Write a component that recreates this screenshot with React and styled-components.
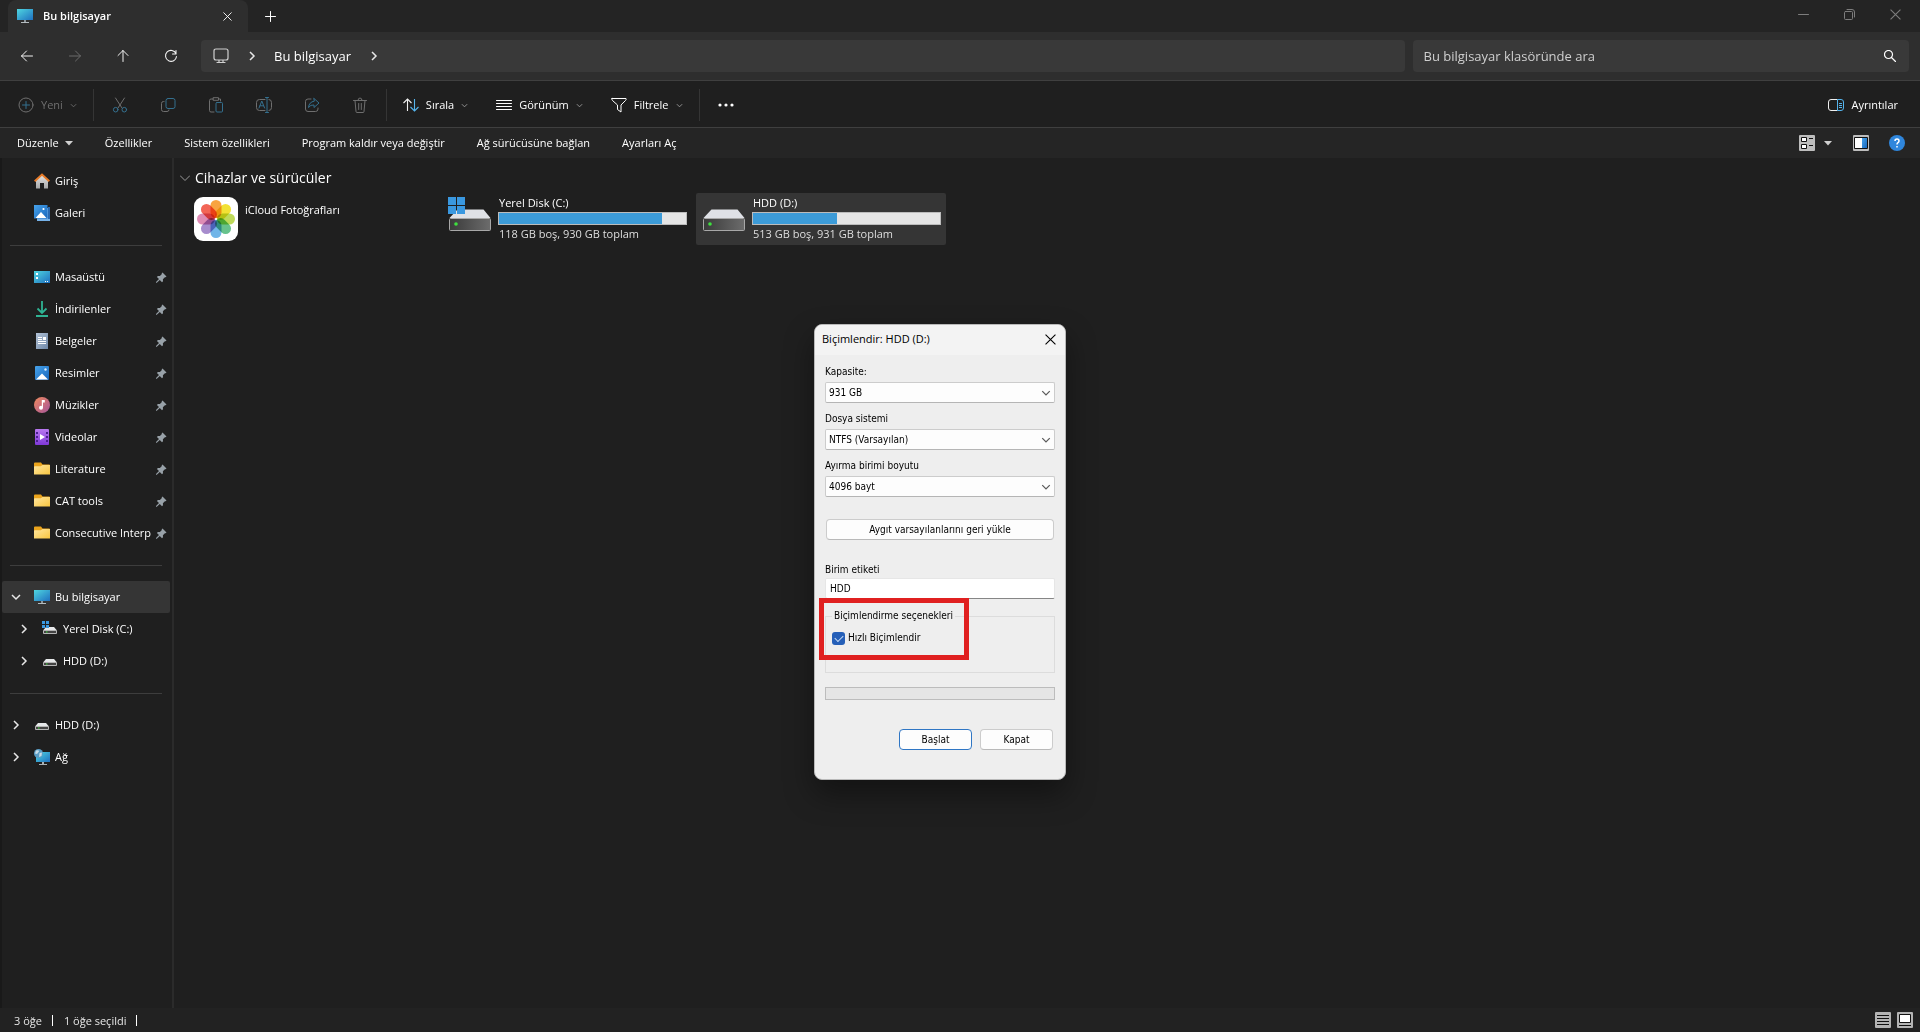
import React, { useState } from 'react';

import styled, { createGlobalStyle, css } from 'styled-components';

const GlobalStyle = createGlobalStyle`
  * {
    box-sizing: border-box;
  }

  body {
    margin: 0;
    background: #1f1f1f;
    color: #ffffff;
    font-family: 'Open Sans', 'Noto Sans', sans-serif;
    font-size: 11px;
    line-height: 16px;
  }

  button,
  input,
  select {
    margin: 0;
    font: inherit;
    color: inherit;
  }

  button {
    padding: 0;
    border: none;
    background: none;
  }

  svg {
    display: block;
    flex: none;
  }
`;

const Window = styled.div`
  display: flex;
  flex-direction: column;
  min-height: 100vh;
  background: #1f1f1f;
`;

/* ---------- tabs ---------- */

const TitleBar = styled.header`
  display: flex;
  align-items: stretch;
  height: 32px;
  padding-left: 8px;
  background: #242424;
`;

const Tab = styled.div`
  display: flex;
  align-items: center;
  gap: 10px;
  width: 240px;
  padding: 0 16px 0 9px;
  border-radius: 8px 8px 0 0;
  background: #2e2e2e;
  font-weight: 600;

  span {
    flex: 1;
  }
`;

const NewTabButton = styled.button`
  display: grid;
  place-items: center;
  width: 45px;
`;

const WindowButtons = styled.div`
  display: flex;
  margin-left: auto;
  padding: 0 2px 4px 0;

  button {
    display: grid;
    place-items: center;
    width: 46px;
    color: #7d7d7d;
  }
`;

/* ---------- navigation ---------- */

const NavBar = styled.nav`
  display: flex;
  align-items: center;
  gap: 8px;
  height: 49px;
  padding: 0 11px 0 7px;
  border-bottom: 1px solid #3f3f3f;
  background: #2e2e2e;
`;

const NavButtons = styled.div`
  display: flex;
  gap: 8px;
  margin-right: 2px;
`;

const NavButton = styled.button`
  display: grid;
  place-items: center;
  width: 40px;
  height: 32px;
  color: ${(props) => (props.disabled ? '#6b6b6b' : '#f3f3f3')};
`;

const AddressBar = styled.div`
  display: flex;
  flex: 12 1 0;
  align-items: center;
  height: 32px;
  padding-left: 12px;
  border-radius: 4px;
  background: #393939;
  font-size: 13px;

  a {
    color: inherit;
    text-decoration: none;
  }
`;

const Crumb = styled.span`
  display: grid;
  place-items: center;
  width: 45px;
`;

const SearchBox = styled.label`
  display: flex;
  flex: 5 1 0;
  align-items: center;
  height: 32px;
  border-radius: 4px;
  background: #393939;

  input {
    flex: 1;
    min-width: 0;
    padding: 0 11px;
    border: none;
    outline: none;
    background: none;
    font-size: 13px;
  }

  input::placeholder {
    color: #cfcfcf;
    opacity: 1;
  }

  svg {
    margin-right: 13px;
  }
`;

/* ---------- command bars ---------- */

const CommandBar = styled.div`
  display: flex;
  align-items: center;
  height: 47px;
  padding: 2px 8px 0 4px;
  border-bottom: 1px solid #3f3f3f;
`;

const CommandButton = styled.button`
  display: flex;
  align-items: center;
  gap: 7px;
  height: 32px;
  padding: 0 14px;
  color: ${(props) => (props.disabled ? '#6f6f6f' : '#ffffff')};
`;

const IconButton = styled.button`
  display: grid;
  place-items: center;
  width: 48px;
  height: 32px;
  color: ${(props) => (props.disabled ? '#6f6f6f' : '#ffffff')};
`;

const BarSeparator = styled.span`
  width: 1px;
  height: 32px;
  margin: 0 2px;
  background: #353535;
`;

const Spacer = styled.span`
  flex: 1;
`;

const OrganizeBar = styled.div`
  display: flex;
  align-items: center;
  gap: 2px;
  height: 30px;
  padding: 0 15px 0 2px;
  background: #252525;
`;

const OrganizeButton = styled.button`
  display: flex;
  align-items: center;
  gap: 6px;
  height: 24px;
  padding: 0 15px;
`;

const ViewTools = styled.div`
  display: flex;
  align-items: center;
  margin-left: auto;
  gap: 20px;

  button:first-child {
    display: flex;
    align-items: center;
    gap: 9px;
    margin-right: 1px;
  }
`;

/* ---------- sidebar ---------- */

const Body = styled.div`
  display: flex;
  flex: 1;
`;

const Sidebar = styled.aside`
  width: 174px;
  padding: 7px 0;
  border-left: 2px solid #191919;
  border-right: 2px solid #2b2b2b;
`;

const TreeItem = styled.a`
  display: flex;
  align-items: center;
  width: 168px;
  height: 32px;
  padding: 0 3px 0 ${(props) => (props.$nested ? 14 : 6)}px;
  border-radius: 2px;
  background: ${(props) => (props.$selected ? '#353535' : 'transparent')};
  color: inherit;
  text-decoration: none;
  white-space: nowrap;

  span {
    flex: 1;
    min-width: 0;
    margin-left: 5px;
    overflow: hidden;
  }
`;

const Twisty = styled.i`
  display: grid;
  place-items: center;
  flex: none;
  width: 16px;
  margin-right: 10px;
`;

const TreeDivider = styled.hr`
  height: 1px;
  margin: 16px 10px 15px 8px;
  border: none;
  background: #3d3d3d;
`;

/* ---------- drives ---------- */

const Content = styled.main`
  flex: 1;
  padding: 10px 14px;
`;

const GroupTitle = styled.h1`
  display: flex;
  align-items: center;
  gap: 5px;
  height: 20px;
  margin: 0 0 5px -8px;
  font-size: 14px;
  font-weight: 400;
`;

const DriveGrid = styled.div`
  display: grid;
  grid-template-columns: repeat(auto-fill, 250px);
  gap: 4px;
`;

const DriveTile = styled.div`
  display: flex;
  height: 52px;
  padding: 2px 5px 2px 6px;
  border-radius: 2px;
  background: ${(props) => (props.$selected ? '#353535' : 'transparent')};
`;

const DriveIcon = styled.div`
  width: 44px;
  margin: 2px 6px 0 0;
`;

const DriveInfo = styled.div`
  flex: 1;
  padding-top: ${(props) => (props.$plain ? 7 : 0)}px;

  p {
    margin: 0 1px;
    color: #dedede;
  }

  p:first-child {
    color: #ffffff;
  }
`;

const UsageBar = styled.div`
  height: 13px;
  margin: 1px 0;
  border: 1px solid #bcbcbc;
  background: #e5e5e5;

  div {
    height: 100%;
    background: #3c9bd8;
  }
`;

/* ---------- status ---------- */

const StatusBar = styled.footer`
  display: flex;
  align-items: center;
  height: 24px;
  padding: 0 7px 0 14px;
  background: #222222;

  span {
    padding-right: 10px;
    margin-right: 11px;
    color: #e6e6e6;
    line-height: 11px;
    border-right: 1px solid #ffffff;
  }

  div {
    display: flex;
    gap: 6px;
    margin-left: auto;
  }
`;

/* ---------- format dialog ---------- */

const Dialog = styled.form`
  position: absolute;
  top: 324px;
  left: 814px;
  width: 252px;
  border: 1px solid #b9b9b9;
  border-radius: 8px;
  background: #eeeeee;
  color: #000000;
  font-family: 'DejaVu Sans Condensed', 'DejaVu Sans', sans-serif;
  font-size: 10px;
  line-height: 14px;
  box-shadow: 0 14px 30px rgba(0, 0, 0, 0.4);
`;

const DialogTitle = styled.header`
  display: flex;
  align-items: center;
  justify-content: space-between;
  height: 30px;
  padding: 0 9px 2px 7px;
  border-radius: 7px 7px 0 0;
  background: #f3f3f3;
  font-family: 'Open Sans', 'Noto Sans', sans-serif;
  font-size: 11px;
`;

const DialogBody = styled.div`
  display: flex;
  flex-direction: column;
  padding: 10px 10px 29px;
`;

const Field = styled.label`
  display: flex;
  flex-direction: column;
  gap: ${(props) => (props.$tight ? 1 : 3)}px;
  margin-bottom: 9px;
`;

const SelectBox = styled.div`
  display: grid;
  align-items: center;

  select,
  svg {
    grid-area: 1 / 1;
  }

  select {
    height: 21px;
    padding: 0 3px;
    border: 1px solid #cccccc;
    border-bottom-color: #b5b5b5;
    border-radius: 2px;
    background: #fdfdfd;
    appearance: none;
  }

  svg {
    justify-self: end;
    margin-right: 4px;
    pointer-events: none;
  }
`;

const TextBox = styled.input`
  height: 21px;
  padding: 0 4px;
  border: 1px solid #e6e6e6;
  border-bottom-color: #868686;
  border-radius: 2px;
  outline: none;
  background: #ffffff;
`;

const DialogButton = styled.button`
  height: 21px;
  border: 1px solid #cccccc;
  border-bottom-color: #b9b9b9;
  border-radius: 4px;
  background: #fdfdfd;

  ${(props) =>
    props.$primary &&
    css`
      border-color: #2f76c4;
    `}

  ${(props) =>
    props.$wide &&
    css`
      margin: 13px 1px 23px;
    `}
`;

const OptionsArea = styled.div`
  position: relative;
  margin-top: 1px;
`;

const Options = styled.fieldset`
  height: 64px;
  margin: 0;
  padding: 8px 6px;
  border: 1px solid #dcdcdc;

  legend {
    padding: 0 2px;
  }

  label {
    display: flex;
    align-items: center;
    gap: 3px;
  }
`;

const CheckBox = styled.input`
  display: grid;
  place-items: center;
  width: 13px;
  height: 13px;
  border-radius: 3px;
  background: #255fb8;
  appearance: none;

  &:checked::after {
    content: '';
    width: 7px;
    height: 4px;
    border: solid #c9dcf5;
    border-width: 0 0 1px 1px;
    transform: translateY(-1px) rotate(-45deg);
  }
`;

// highlight drawn over the group box
const Highlight = styled.div`
  position: absolute;
  top: -11px;
  left: -6px;
  width: 150px;
  height: 62px;
  border: 5px solid #e02020;
  pointer-events: none;
`;

const Progress = styled.div`
  height: 13px;
  margin: 14px 0 29px;
  border: 1px solid #bcbcbc;
  background: #e5e5e5;
`;

const DialogActions = styled.div`
  display: flex;
  justify-content: flex-end;
  gap: 8px;
  padding-right: 2px;

  button {
    width: 73px;
  }
`;

/* ---------- icons ---------- */

function Line({ size = 16, d, accent, stroke = 'currentColor', width = 1 }) {
  return (
    <svg width={size} height={size} viewBox={`0 0 ${size} ${size}`} fill="none" stroke={stroke} strokeWidth={width} strokeLinecap="round" strokeLinejoin="round">
      <path d={d} />
      {accent && <path d={accent} stroke="#34708f" />}
    </svg>
  );
}

const CloseIcon = ({ size = 9 }) => (
  <svg width={size} height={size} viewBox="0 0 10 10" stroke="currentColor" strokeWidth="1">
    <path d="M.5.5l9 9M9.5.5l-9 9" />
  </svg>
);

const ChevronDown = ({ color = '#a0a0a0', size = 7 }) => (
  <svg width={size} height={size} viewBox="0 0 8 8" fill="none" stroke={color} strokeWidth="1">
    <path d="M1 2.5l3 3 3-3" />
  </svg>
);

const ChevronRight = () => (
  <svg width="8" height="10" viewBox="0 0 8 10" fill="none" stroke="#e8e8e8" strokeWidth="1.5">
    <path d="M2 1l4 4-4 4" />
  </svg>
);

const TriangleDown = () => (
  <svg width="8" height="5" viewBox="0 0 8 5" fill="#d0d0d0">
    <path d="M0 0h8L4 4.5z" />
  </svg>
);

const Defs = () => (
  <svg width="0" height="0" style={{ position: 'absolute' }} aria-hidden="true">
    <defs>
      <linearGradient id="screen" x1="0" y1="0" x2="1" y2="1">
        <stop offset="0" stopColor="#4fd6e0" />
        <stop offset="1" stopColor="#1f70c0" />
      </linearGradient>
      <linearGradient id="photo" x1="0" y1="0" x2="1" y2="1">
        <stop offset="0" stopColor="#47a3ea" />
        <stop offset="1" stopColor="#1766bd" />
      </linearGradient>
      <linearGradient id="folder" x1="0" y1="0" x2="1" y2="1">
        <stop offset="0" stopColor="#ffe6a0" />
        <stop offset="1" stopColor="#f7c540" />
      </linearGradient>
      <linearGradient id="music" x1="0" y1="0" x2="1" y2="1">
        <stop offset="0" stopColor="#f08a5c" />
        <stop offset="1" stopColor="#a5559c" />
      </linearGradient>
      <linearGradient id="video" x1="0" y1="0" x2="0" y2="1">
        <stop offset="0" stopColor="#b878f0" />
        <stop offset="1" stopColor="#8038d8" />
      </linearGradient>
      <linearGradient id="paper" x1="0" y1="0" x2="1" y2="1">
        <stop offset="0" stopColor="#b4c4d8" />
        <stop offset="1" stopColor="#6f88a8" />
      </linearGradient>
      <linearGradient id="casing" x1="0" y1="0" x2="1" y2="0">
        <stop offset="0" stopColor="#3a3a3a" />
        <stop offset="1" stopColor="#6c6c6c" />
      </linearGradient>
      <linearGradient id="wall" x1="0" y1="0" x2="0" y2="1">
        <stop offset="0" stopColor="#e6e6e6" />
        <stop offset="1" stopColor="#a8a8a8" />
      </linearGradient>
    </defs>
  </svg>
);

const PcIcon = () => (
  <svg width="16" height="16" viewBox="0 0 16 16">
    <path d="M0 1h16v11H0z" fill="url(#screen)" />
    <path d="M7 12h2v2H7z" fill="#8d969c" />
    <path d="M4 14h8v1H4z" fill="#b4bcc0" />
  </svg>
);

const HomeIcon = () => (
  <svg width="16" height="16" viewBox="0 0 16 16">
    <path d="M2 7l6-5.5L14 7v8.5h-4V10H6v5.5H2z" fill="url(#wall)" />
    <path d="M.7 8.3L8 1.5l7.3 6.8" fill="none" stroke="#e67a28" strokeWidth="2" />
  </svg>
);

const GalleryIcon = () => (
  <svg width="16" height="16" viewBox="0 0 16 16">
    <path d="M3 3h13v13H3z" fill="#75b1e8" />
    <path d="M14 2h2v12h-2z" fill="#2868b0" />
    <path d="M0 0h13.5v13.5H0z" fill="url(#photo)" />
    <path d="M1.500 13L7 7l5.500 6z" fill="#fff" />
    <circle cx="9.5" cy="4" r="1.1" fill="#fff" />
  </svg>
);

const DesktopIcon = () => (
  <svg width="16" height="16" viewBox="0 0 16 16">
    <path d="M0 2h16v12H0z" fill="url(#screen)" />
    <path d="M2 4h2v2H2zM2 8h2v2H2zM11 12h1v1h-1zM13 12h1v1h-1z" fill="#fff" />
  </svg>
);

const DownloadIcon = () => (
  <svg width="16" height="16" viewBox="0 0 16 16" fill="none" stroke="#2fb393" strokeWidth="1.8">
    <path d="M8 0v12M3.500 7.500L8 12l4.500-4.500M2 15h12" />
  </svg>
);

const DocumentIcon = () => (
  <svg width="16" height="16" viewBox="0 0 16 16">
    <path d="M2 0h12v16H2z" fill="url(#paper)" />
    <path d="M4 4h4v1H4zM4 6h4v1H4zM4 8h8v1H4zM4 10h8v1H4zM9 4h3v3H9z" fill="#fff" />
  </svg>
);

const PictureIcon = () => (
  <svg width="16" height="16" viewBox="0 0 16 16">
    <rect x="1" y="1" width="14" height="14" rx="1" fill="url(#photo)" />
    <path d="M2 14.500L8 8.500l6 6z" fill="#fff" />
    <circle cx="11.5" cy="4.5" r="1.2" fill="#d8ecff" />
  </svg>
);

const MusicIcon = () => (
  <svg width="16" height="16" viewBox="0 0 16 16">
    <circle cx="8" cy="8" r="8" fill="url(#music)" />
    <circle cx="7" cy="10.8" r="2" fill="#fff" />
    <path d="M7.800 3h3v2.500H9v5.300H7.800z" fill="#fff" />
  </svg>
);

const VideoIcon = () => (
  <svg width="16" height="16" viewBox="0 0 16 16">
    <rect x="1" width="14" height="16" rx="1" fill="url(#video)" />
    <path d="M2 3h2v2H2zM2 7h2v2H2zM2 11h2v2H2zM12 3h2v2h-2zM12 7h2v2h-2zM12 11h2v2h-2z" fill="#4a2090" />
    <path d="M6 5l5 3-5 3z" fill="#fff" />
  </svg>
);

const FolderIcon = () => (
  <svg width="16" height="16" viewBox="0 0 16 16">
    <path d="M0 2.500Q0 1.500 1 1.500h6l1.500 2H15q1 0 1 1V13H0z" fill="#eba41c" />
    <path d="M0 6q0-.8.8-.8h6L8.500 4H16v9.500H0z" fill="url(#folder)" />
  </svg>
);

const SmallDriveIcon = ({ system }) => (
  <svg width="16" height="16" viewBox="0 0 16 16">
    <path d="M4 6h8l3 3.500H1z" fill="#e6e8ea" />
    <path d="M1.500 9.500h13v3h-13z" fill="#444" stroke="#b5b5b5" />
    <path d="M4 10.500h1.500v1H4z" fill="#38e038" />
    {system && <path d="M0 0h3v3H0zM4 0h3v3H4zM0 4h3v3H0zM4 4h3v3H4z" fill="#3a98e0" />}
  </svg>
);

const NetworkIcon = () => (
  <svg width="16" height="16" viewBox="0 0 16 16">
    <path d="M2 3h14v10H2z" fill="url(#screen)" />
    <path d="M8 13h2v2H8zM5 15h8v1H5z" fill="#a8b0b5" />
    <circle cx="4.5" cy="4.5" r="4.5" fill="#5a9cc4" />
    <path d="M2 1.500q3-1 3 1L3 5 1 4.500zM5.500 4L8 3.500 7.500 7 5 8z" fill="#c6dce8" />
  </svg>
);

const PinIcon = () => (
  <svg width="11" height="11" viewBox="0 0 11 11" fill="#98a1a8">
    <path d="M6.500.5l4 4-1 .8-.6-.1-2 2 .1 2-1 1L3.800 8 .8 10.800H0V10l3-3L.9 4.900l1-1 2 .1 2-2L5.700 1.200z" />
  </svg>
);

const DiskIcon = ({ system }) => (
  <svg width="44" height="36" viewBox="0 0 44 36">
    <path d="M9.500 12.500h26L42.500 21h-41z" fill="#dfe1e6" />
    <rect x="1.5" y="21.5" width="41" height="12" rx="1" fill="url(#casing)" stroke="#a8a8a8" />
    <circle cx="8" cy="27" r="1.8" fill="#3ee03e" />
    {system && <path d="M0 0h8v8H0zM9 0h8v8H9zM0 9h8v8H0zM9 9h8v8H9z" fill="#3a98e0" />}
  </svg>
);

const petals = ['#f7941e', '#f0dc10', '#b4d43c', '#4cb878', '#58a8e4', '#9878c4', '#d878a8', '#f04a38'];

const PhotosIcon = () => (
  <svg width="44" height="44" viewBox="0 0 44 44">
    <rect width="44" height="44" rx="9" fill="#fff" />
    {petals.map((color, i) => (
      <rect
        key={color}
        x="16.5"
        y="3"
        width="11"
        height="18"
        rx="5.5"
        fill={color}
        opacity="0.85"
        transform={`rotate(${i * 45} 22 22)`}
        style={{ mixBlendMode: 'multiply' }}
      />
    ))}
  </svg>
);

/* ---------- data ---------- */

const quickAccess = [
  { name: 'Masaüstü', icon: <DesktopIcon /> },
  { name: 'İndirilenler', icon: <DownloadIcon /> },
  { name: 'Belgeler', icon: <DocumentIcon /> },
  { name: 'Resimler', icon: <PictureIcon /> },
  { name: 'Müzikler', icon: <MusicIcon /> },
  { name: 'Videolar', icon: <VideoIcon /> },
  { name: 'Literature', icon: <FolderIcon /> },
  { name: 'CAT tools', icon: <FolderIcon /> },
  { name: 'Consecutive Interp', icon: <FolderIcon /> },
];

const drives = [
  { name: 'Yerel Disk (C:)', info: '118 GB boş, 930 GB toplam', used: 87, system: true },
  { name: 'HDD (D:)', info: '513 GB boş, 931 GB toplam', used: 45, selected: true },
];

function TreeRow({ name, icon, pinned, twisty, nested, selected }) {
  return (
    <TreeItem href="#" $nested={nested} $selected={selected}>
      <Twisty>
        {twisty === 'open' && (
          <svg width="10" height="8" viewBox="0 0 10 8" fill="none" stroke="#e8e8e8" strokeWidth="1.5">
            <path d="M1 2l4 4 4-4" />
          </svg>
        )}
        {twisty === 'closed' && <ChevronRight />}
      </Twisty>
      {icon}
      <span>{name}</span>
      {pinned && <PinIcon />}
    </TreeItem>
  );
}

function FormatDialog() {
  const [label, setLabel] = useState('HDD');
  const [quick, setQuick] = useState(true);

  const selects = [
    { title: 'Kapasite:', value: '931 GB' },
    { title: 'Dosya sistemi', value: 'NTFS (Varsayılan)' },
    { title: 'Ayırma birimi boyutu', value: '4096 bayt' },
  ];

  return (
    <Dialog role="dialog" aria-label="Biçimlendir: HDD (D:)" onSubmit={(e) => e.preventDefault()}>
      <DialogTitle>
        Biçimlendir: HDD (D:)
        <button type="button" aria-label="Kapat">
          <CloseIcon size={11} />
        </button>
      </DialogTitle>
      <DialogBody>
        {selects.map((item) => (
          <Field key={item.title}>
            {item.title}
            <SelectBox>
              <select>
                <option>{item.value}</option>
              </select>
              <ChevronDown color="#5a5a5a" size={10} />
            </SelectBox>
          </Field>
        ))}
        <DialogButton type="button" $wide>
          Aygıt varsayılanlarını geri yükle
        </DialogButton>
        <Field $tight>
          Birim etiketi
          <TextBox value={label} onChange={(e) => setLabel(e.target.value)} />
        </Field>
        <OptionsArea>
          <Options>
            <legend>Biçimlendirme seçenekleri</legend>
            <label>
              <CheckBox type="checkbox" checked={quick} onChange={() => setQuick(!quick)} />
              Hızlı Biçimlendir
            </label>
          </Options>
          <Highlight />
        </OptionsArea>
        <Progress role="progressbar" aria-label="İlerleme" />
        <DialogActions>
          <DialogButton $primary>Başlat</DialogButton>
          <DialogButton type="button">Kapat</DialogButton>
        </DialogActions>
      </DialogBody>
    </Dialog>
  );
}

export default function App() {
  return (
    <Window>
      <GlobalStyle />
      <Defs />

      <TitleBar>
        <Tab>
          <PcIcon />
          <span>Bu bilgisayar</span>
          <button aria-label="Sekmeyi kapat">
            <CloseIcon />
          </button>
        </Tab>
        <NewTabButton aria-label="Yeni sekme">
          <Line size={11} d="M5.500.5v10M.5 5.500h10" />
        </NewTabButton>
        <WindowButtons>
          <button aria-label="Simge durumuna küçült">
            <Line size={11} d="M.5 5.500h10" />
          </button>
          <button aria-label="Önceki boyut">
            <Line size={11} d="M1.500 2.500h6q1 0 1 1v6q0 1-1 1h-6q-1 0-1-1v-6q0-1 1-1zM3 .5h5q2.500 0 2.500 2.500v5" />
          </button>
          <button aria-label="Kapat">
            <CloseIcon size={11} />
          </button>
        </WindowButtons>
      </TitleBar>

      <NavBar>
        <NavButtons>
          <NavButton aria-label="Geri">
            <Line d="M13.500 8H2.500M7.500 3L2.500 8l5 5" />
          </NavButton>
          <NavButton aria-label="İleri" disabled>
            <Line d="M2.500 8h11M8.500 3l5 5-5 5" />
          </NavButton>
          <NavButton aria-label="Yukarı">
            <Line d="M8 13.500V2.500M3 7.500l5-5 5 5" />
          </NavButton>
          <NavButton aria-label="Yenile">
            <Line d="M13 5.500A5.500 5.500 0 1 0 13.500 8.500M13 2.500v3.500H9.500" width={1.1} />
          </NavButton>
        </NavButtons>
        <AddressBar>
          <Line d="M3 1h10q2 0 2 2v7q0 2-2 2H3q-2 0-2-2V3q0-2 2-2zM6 12v2.500M10 12v2.500M4 14.500h8" stroke="#d0d0d0" width={1.2} />
          <Crumb>
            <ChevronRight />
          </Crumb>
          <a href="#">Bu bilgisayar</a>
          <Crumb>
            <ChevronRight />
          </Crumb>
        </AddressBar>
        <SearchBox>
          <input type="text" placeholder="Bu bilgisayar klasöründe ara" aria-label="Ara" />
          <Line size={12} d="M8.500 4.500a4 4 0 1 1-8 0 4 4 0 0 1 8 0zM7.500 7.500l4 4" width={1.2} />
        </SearchBox>
      </NavBar>

      <CommandBar>
        <CommandButton disabled>
          <Line d="M15 8A7 7 0 1 1 1 8a7 7 0 0 1 14 0z" accent="M8 4.500v7M4.500 8h7" />
          Yeni
          <ChevronDown color="#6f6f6f" />
        </CommandButton>
        <BarSeparator />
        <IconButton aria-label="Kes" disabled>
          <Line d="M3.500 1l6.500 10M12.500 1L6 11" accent="M6 12.700a2.300 2.300 0 1 1-4.600 0 2.300 2.300 0 0 1 4.600 0zM14.600 12.700a2.300 2.300 0 1 1-4.600 0 2.300 2.300 0 0 1 4.600 0z" />
        </IconButton>
        <IconButton aria-label="Kopyala" disabled>
          <Line d="M4 4.500H3.500q-2 0-2 2v6q0 2 2 2h3.500q2 0 2-1.500" accent="M8 1.500h5q2 0 2 2v6q0 2-2 2H8q-2 0-2-2v-6q0-2 2-2z" />
        </IconButton>
        <IconButton aria-label="Yapıştır" disabled>
          <Line d="M5 2H3Q1.500 2 1.500 3.500v10Q1.500 15 3 15h3M11 2h1.500v2M5.500.7h5v2.600h-5z" accent="M9 5.500h4.500q1 0 1 1V14q0 1-1 1H9q-1 0-1-1V6.500q0-1 1-1z" />
        </IconButton>
        <IconButton aria-label="Yeniden adlandır" disabled>
          <Line d="M9 2.500H3.500q-3 0-3 3v5q0 3 3 3H9M13 2.500q2.500 0 2.500 3v5q0 3-2.500 3" accent="M11 .5v15M9.500.5h3M9.500 15.500h3M3 11l2.800-7 2.800 7M4 8.800h3.600" />
        </IconButton>
        <IconButton aria-label="Paylaş" disabled>
          <Line d="M7 2H4Q1.500 2 1.500 4.500V12q0 2.500 2.500 2.500h7.500Q14 14.500 14 12v-1" accent="M10 1.500L15 6l-5 4.500V8Q6.500 7.500 4.500 10.500 5 5 10 4.200z" />
        </IconButton>
        <IconButton aria-label="Sil" disabled>
          <Line d="M1.500 3.500h13M6 3.500Q6 1 8 1t2 2.500M3 3.500l1 11q0 1 1 1h6q1 0 1-1l1-11M6.700 6.500v6M9.300 6.500v6" />
        </IconButton>
        <BarSeparator />
        <CommandButton>
          <svg width="16" height="16" viewBox="0 0 16 16" fill="none" strokeWidth="1.1">
            <path d="M4.500 14V2M.5 6l4-4 4 4" stroke="#f0f0f0" />
            <path d="M11.500 2v12M7.500 10l4 4 4-4" stroke="#55b4ec" />
          </svg>
          Sırala
          <ChevronDown />
        </CommandButton>
        <CommandButton>
          <Line d="M.5 3.500h15M.5 6.500h15M.5 9.500h15M.5 12.500h15" />
          Görünüm
          <ChevronDown />
        </CommandButton>
        <CommandButton>
          <Line d="M1 1.500h14q.5 1-.5 2L10 8v7L6.500 12.500V8L1.500 3.500Q.5 2.500 1 1.500z" />
          Filtrele
          <ChevronDown />
        </CommandButton>
        <BarSeparator />
        <IconButton aria-label="Diğer">
          <svg width="16" height="4" viewBox="0 0 16 4" fill="#ffffff">
            <circle cx="2" cy="2" r="1.6" />
            <circle cx="8" cy="2" r="1.6" />
            <circle cx="14" cy="2" r="1.6" />
          </svg>
        </IconButton>
        <Spacer />
        <CommandButton>
          <svg width="16" height="16" viewBox="0 0 16 16" fill="none">
            <path d="M9.500 2.500H3q-2.500 0-2.500 2.500v6q0 2.500 2.500 2.500h6.500" stroke="#f0f0f0" />
            <path d="M9.500 2.500H13q2.500 0 2.500 2.500v6q0 2.500-2.500 2.500H9.500zM11 6.500h3M11 8.500h3M11 10.500h3" stroke="#55b4ec" />
          </svg>
          Ayrıntılar
        </CommandButton>
      </CommandBar>

      <OrganizeBar>
        <OrganizeButton>
          Düzenle
          <TriangleDown />
        </OrganizeButton>
        <OrganizeButton>Özellikler</OrganizeButton>
        <OrganizeButton>Sistem özellikleri</OrganizeButton>
        <OrganizeButton>Program kaldır veya değiştir</OrganizeButton>
        <OrganizeButton>Ağ sürücüsüne bağlan</OrganizeButton>
        <OrganizeButton>Ayarları Aç</OrganizeButton>
        <ViewTools>
          <button aria-label="Görünümü değiştir">
            <svg width="16" height="16" viewBox="0 0 16 16">
              <rect width="16" height="16" rx="1" fill="#bdbdbd" />
              <path d="M2.500 2.500h5v4h-5zM2.500 9.500h5v4h-5z" fill="#fff" stroke="#111" />
              <path d="M10 3.500h4M10 10.500h4" stroke="#111" />
            </svg>
            <TriangleDown />
          </button>
          <button aria-label="Önizleme bölmesi">
            <svg width="16" height="16" viewBox="0 0 16 16">
              <rect width="16" height="16" rx="1" fill="#bdbdbd" />
              <path d="M1.500 2.500h13v11h-13z" fill="#fff" stroke="#111" />
              <path d="M9 3h5v10H9z" fill="url(#photo)" />
            </svg>
          </button>
          <button aria-label="Yardım">
            <svg width="16" height="16" viewBox="0 0 16 16">
              <circle cx="8" cy="8" r="8" fill="#2f86dc" />
              <path d="M6 6Q6 4 8 4t2 2q0 1-1 1.600T8 9.500M8 11v1.500" fill="none" stroke="#fff" strokeWidth="1.5" />
            </svg>
          </button>
        </ViewTools>
      </OrganizeBar>

      <Body>
        <Sidebar>
          <TreeRow name="Giriş" icon={<HomeIcon />} />
          <TreeRow name="Galeri" icon={<GalleryIcon />} />
          <TreeDivider />
          {quickAccess.map((item) => (
            <TreeRow key={item.name} name={item.name} icon={item.icon} pinned />
          ))}
          <TreeDivider />
          <TreeRow name="Bu bilgisayar" icon={<PcIcon />} twisty="open" selected />
          <TreeRow name="Yerel Disk (C:)" icon={<SmallDriveIcon system />} twisty="closed" nested />
          <TreeRow name="HDD (D:)" icon={<SmallDriveIcon />} twisty="closed" nested />
          <TreeDivider />
          <TreeRow name="HDD (D:)" icon={<SmallDriveIcon />} twisty="closed" />
          <TreeRow name="Ağ" icon={<NetworkIcon />} twisty="closed" />
        </Sidebar>

        <Content>
          <GroupTitle>
            <svg width="10" height="8" viewBox="0 0 10 8" fill="none" stroke="#9a9a9a">
              <path d="M0 1.500l5 5 5-5" />
            </svg>
            Cihazlar ve sürücüler
          </GroupTitle>
          <DriveGrid>
            <DriveTile>
              <DriveIcon>
                <PhotosIcon />
              </DriveIcon>
              <DriveInfo $plain>
                <p>iCloud Fotoğrafları</p>
              </DriveInfo>
            </DriveTile>
            {drives.map((drive) => (
              <DriveTile key={drive.name} $selected={drive.selected}>
                <DriveIcon>
                  <DiskIcon system={drive.system} />
                </DriveIcon>
                <DriveInfo>
                  <p>{drive.name}</p>
                  <UsageBar>
                    <div style={{ width: `${drive.used}%` }} />
                  </UsageBar>
                  <p>{drive.info}</p>
                </DriveInfo>
              </DriveTile>
            ))}
          </DriveGrid>
        </Content>
      </Body>

      <StatusBar>
        <span>3 öğe</span>
        <span>1 öğe seçildi</span>
        <div>
          <button aria-label="Ayrıntılar görünümü">
            <svg width="16" height="16" viewBox="0 0 16 16">
              <rect width="16" height="16" rx="1" fill="#b4b4b4" />
              <path d="M2 3.500h12M2 6.500h12M2 9.500h12M2 12.500h12" stroke="#111" />
            </svg>
          </button>
          <button aria-label="Büyük simgeler">
            <svg width="16" height="16" viewBox="0 0 16 16">
              <rect width="16" height="16" rx="1" fill="#b4b4b4" />
              <path d="M2.500 2.500h11v8h-11z" fill="#fff" stroke="#111" />
              <path d="M2 13.500h12" stroke="#111" />
            </svg>
          </button>
        </div>
      </StatusBar>

      <FormatDialog />
    </Window>
  );
}
